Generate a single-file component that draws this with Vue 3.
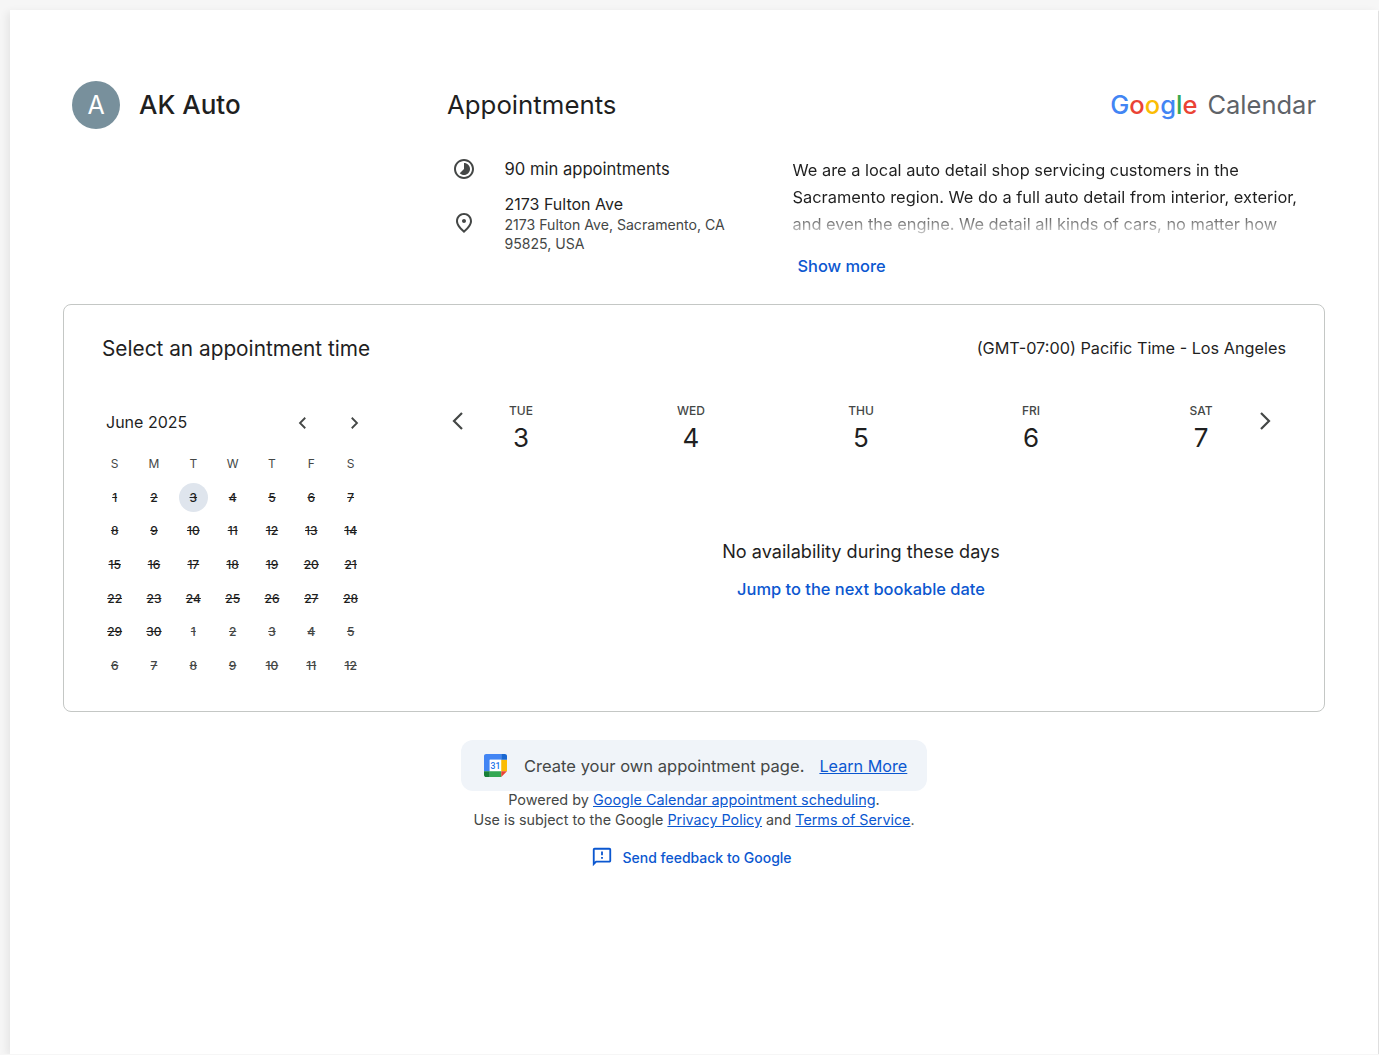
<template>
  <div class="sheet">
    <header class="top-row">
      <div class="owner">
        <div class="avatar">A</div>
        <div class="owner-name">AK Auto</div>
      </div>
      <h1 class="page-title">Appointments</h1>
      <div class="brand">
        <span class="g-word"><span class="blue">G</span><span class="red">o</span><span class="yellow">o</span><span class="blue">g</span><span class="green">l</span><span class="red">e</span></span>
        <span class="cal-word">Calendar</span>
      </div>
    </header>

    <section class="details">
      <div class="facts">
        <div class="fact">
          <svg class="fact-icon" viewBox="0 0 24 24"><path d="M16.24 7.76C15.07 6.59 13.54 6 12 6v6l-4.24 4.24c2.34 2.34 6.14 2.34 8.49 0 2.34-2.34 2.34-6.14-.01-8.48zM12 2C6.48 2 2 6.48 2 12s4.48 10 10 10 10-4.48 10-10S17.52 2 12 2zm0 18c-4.42 0-8-3.58-8-8s3.58-8 8-8 8 3.58 8 8-3.58 8-8 8z"/></svg>
          <div class="fact-main duration">90 min appointments</div>
        </div>
        <div class="fact fact-place">
          <svg class="fact-icon" viewBox="0 0 24 24"><path d="M12 12c-1.1 0-2-.9-2-2s.9-2 2-2 2 .9 2 2-.9 2-2 2zm6-1.8C18 6.57 15.35 4 12 4s-6 2.57-6 6.2c0 2.34 1.95 5.44 6 9.14 4.05-3.7 6-6.8 6-9.14zM12 2c4.2 0 8 3.22 8 8.2 0 3.32-2.67 7.25-8 11.8-5.33-4.55-8-8.48-8-11.8C4 5.22 7.8 2 12 2z"/></svg>
          <div>
            <div class="fact-main">2173 Fulton Ave</div>
            <div class="fact-sub">2173 Fulton Ave, Sacramento, CA<br>95825, USA</div>
          </div>
        </div>
      </div>
      <div class="about">
        <p class="about-text">We are a local auto detail shop servicing customers in the Sacramento region. We do a full auto detail from interior, exterior, and even the engine. We detail all kinds of cars, no matter how</p>
        <a class="show-more">Show more</a>
      </div>
    </section>

    <section class="picker">
      <div class="picker-head">
        <h2 class="picker-title">Select an appointment time</h2>
        <div class="timezone">(GMT-07:00) Pacific Time - Los Angeles</div>
      </div>
      <div class="picker-body">
        <div class="month">
          <div class="month-head">
            <span class="month-name">June 2025</span>
            <span class="month-nav">
              <svg class="chev-s" viewBox="0 0 24 24"><path d="M15 5l-7 7 7 7"/></svg>
              <svg class="chev-s" viewBox="0 0 24 24"><path d="M9 5l7 7-7 7"/></svg>
            </span>
          </div>
          <div class="grid">
            <div v-for="(d, i) in dow" :key="'h' + i" class="dow">{{ d }}</div>
            <div v-for="(c, i) in cells" :key="i" class="cell" :class="{ muted: c.muted }">
              <span class="day" :class="{ today: c.today }">{{ c.n }}</span>
            </div>
          </div>
        </div>
        <div class="week">
          <svg class="chev-l chev-prev" viewBox="0 0 24 24"><path d="M16 4l-8 8 8 8"/></svg>
          <div class="week-head">
            <div v-for="w in week" :key="w.n" class="wd">
              <div class="wd-name">{{ w.d }}</div>
              <div class="wd-num">{{ w.n }}</div>
            </div>
          </div>
          <svg class="chev-l chev-next" viewBox="0 0 24 24"><path d="M8 4l8 8-8 8"/></svg>
          <div class="empty">
            <div class="empty-text">No availability during these days</div>
            <a class="jump">Jump to the next bookable date</a>
          </div>
        </div>
      </div>
    </section>

    <footer class="foot">
      <div class="promo">
        <svg class="cal-logo" viewBox="0 0 24 24">
          <path fill="#4285f4" d="M18 0H2.2C1 0 0 1 0 2.2V18h6V6h12z"/>
          <path fill="#fff" d="M6 6h12v12H6z"/>
          <path fill="#fbbc04" d="M18 6h6v12h-6z"/>
          <path fill="#1967d2" d="M18 0v6h6V2.2C24 1 23 0 21.8 0z"/>
          <path fill="#34a853" d="M6 18h12v6H6z"/>
          <path fill="#188038" d="M0 18v3.8C0 23 1 24 2.2 24H6v-6z"/>
          <path fill="#ea4335" d="M18 18v6l6-6z"/>
          <text x="12" y="15.6" text-anchor="middle" class="cal-num">31</text>
        </svg>
        <span class="promo-text">Create your own appointment page.</span>
        <a class="promo-link">Learn More</a>
      </div>
      <div class="legal">
        <div class="powered">Powered by <a>Google Calendar appointment scheduling</a>.</div>
        <div>Use is subject to the Google <a>Privacy Policy</a> and <a>Terms of Service</a>.</div>
      </div>
      <a class="feedback">
        <svg class="fb-icon" viewBox="0 0 24 24"><path d="M20 2H4c-1.1 0-2 .9-2 2v18l4-4h14c1.1 0 2-.9 2-2V4c0-1.1-.9-2-2-2zm0 14H5.17L4 17.17V4h16v12z"/><path d="M11 12h2v2h-2zm0-6h2v4h-2z"/></svg>
        Send feedback to Google
      </a>
    </footer>
  </div>
</template>

<script setup>
const dow = ['S', 'M', 'T', 'W', 'T', 'F', 'S']

const cells = []
for (let n = 1; n <= 30; n++) cells.push({ n, today: n === 3 })
for (let n = 1; n <= 12; n++) cells.push({ n, muted: true })

const week = [
  { d: 'TUE', n: 3 },
  { d: 'WED', n: 4 },
  { d: 'THU', n: 5 },
  { d: 'FRI', n: 6 },
  { d: 'SAT', n: 7 },
]
</script>

<style>
body {
  background: #f6f6f6;
}
</style>

<style scoped>
.sheet {
  box-sizing: border-box;
  margin: 10px 1px 0 10px;
  height: 1044px;
  padding: 71px 53px 0;
  background: #fff;
  box-shadow: -3px 2px 8px rgba(0, 0, 0, 0.07), 1px 1px 0 #e2e2e2;
  font-family: Inter, "Noto Sans", sans-serif;
  color: #1f1f1f;
}

a {
  color: #0b57d0;
}

.top-row {
  display: flex;
  align-items: center;
  height: 48px;
  padding: 0 9px;
}
.owner {
  display: flex;
  align-items: center;
  gap: 20px;
  width: 375px;
}
.avatar {
  width: 48px;
  height: 48px;
  border-radius: 50%;
  background: #78909c;
  color: #fff;
  font-size: 25px;
  line-height: 48px;
  text-align: center;
}
.owner-name {
  margin: 0 0 2px -1px;
  font-size: 26px;
  font-weight: 500;
}
.page-title {
  flex: 1;
  margin: 0 0 2px;
  font-size: 25.8px;
  font-weight: 400;
}
.brand {
  display: flex;
  align-items: center;
  gap: 10px;
  margin-bottom: 2px;
  font-size: 25.5px;
}
.g-word {
  font-weight: 500;
}
.blue { color: #4285f4; }
.red { color: #ea4335; }
.yellow { color: #fbbc04; }
.green { color: #34a853; }
.cal-word {
  color: #5f6368;
}

.details {
  display: flex;
  height: 175px;
  padding: 28px 0 0 389px;
  box-sizing: border-box;
}
.facts {
  width: 340.5px;
}
.fact {
  display: flex;
  align-items: center;
  gap: 28.5px;
  font-size: 16px;
}
.fact-place {
  margin-top: 11px;
}
.fact-icon {
  flex: none;
  width: 24px;
  height: 24px;
  fill: #444746;
}
.fact-main {
  line-height: 24px;
}
.duration {
  font-size: 16.6px;
}
.fact-sub {
  margin-top: -1px;
  font-size: 14.1px;
  line-height: 19px;
  color: #444746;
}
.about {
  width: 510px;
}
.about-text {
  margin: 0;
  height: 81px;
  overflow: hidden;
  font-size: 16.4px;
  line-height: 27px;
  -webkit-mask-image: linear-gradient(to bottom, #000 52px, rgba(0, 0, 0, 0.3) 74px);
  mask-image: linear-gradient(to bottom, #000 52px, rgba(0, 0, 0, 0.3) 74px);
}
.show-more {
  display: block;
  margin: 18px 0 0 5px;
  font-size: 16.4px;
  font-weight: 500;
}

.picker {
  box-sizing: border-box;
  height: 408px;
  padding: 0 38px;
  border: 1px solid #c4c7c5;
  border-radius: 8px;
}
.picker-head {
  display: flex;
  justify-content: space-between;
  align-items: center;
  padding-top: 28px;
  height: 58px;
  box-sizing: border-box;
}
.picker-title {
  margin: 0;
  font-size: 20.8px;
  font-weight: 400;
}
.timezone {
  font-size: 16.25px;
}
.picker-body {
  display: flex;
  margin-top: 47px;
}

.month {
  width: 274px;
  margin-left: -7px;
  flex: none;
}
.month-head {
  display: flex;
  justify-content: space-between;
  align-items: center;
  height: 24px;
  padding: 0 6px 0 11px;
}
.month-name {
  font-size: 16px;
}
.month-nav {
  display: flex;
  gap: 33px;
  padding-top: 1px;
}
.chev-s {
  width: 18px;
  height: 18px;
  fill: none;
  stroke: #444746;
  stroke-width: 2.4;
}
.grid {
  display: grid;
  grid-template-columns: repeat(7, 39.33px);
  grid-auto-rows: 33.6px;
  margin-top: 13px;
  justify-items: center;
  align-items: center;
}
.dow {
  font-size: 12px;
  color: #444746;
}
.cell {
  font-size: 12px;
  font-weight: 500;
  text-decoration: line-through;
}
.cell.muted {
  color: #444746;
}
.day {
  display: block;
  width: 29px;
  height: 29px;
  line-height: 29px;
  text-align: center;
  border-radius: 50%;
}
.day.today {
  background: #dfe5ed;
}

.week {
  position: relative;
  flex: 1;
  margin: -7px 0 0 67px;
}
.week-head {
  display: flex;
}
.chev-l {
  position: absolute;
  top: 6px;
  width: 24px;
  height: 24px;
  fill: none;
  stroke: #444746;
  stroke-width: 2.2;
}
.chev-prev {
  left: 10px;
}
.chev-next {
  right: 9px;
}
.wd {
  flex: 1;
  text-align: center;
}
.wd-name {
  font-size: 12px;
  font-weight: 500;
  color: #444746;
  line-height: 15px;
}
.wd-num {
  margin-top: 2px;
  font-size: 26px;
  line-height: 36px;
}
.empty {
  margin-top: 84px;
  text-align: center;
}
.empty-text {
  font-size: 18.1px;
}
.jump {
  display: block;
  margin-top: 17px;
  font-size: 16.45px;
  font-weight: 500;
}

.foot {
  display: flex;
  flex-direction: column;
  align-items: center;
  margin-top: 28px;
}
.promo {
  display: flex;
  align-items: center;
  box-sizing: border-box;
  width: 466px;
  height: 51px;
  padding-left: 23px;
  border-radius: 12px;
  background: #f0f4f9;
}
.cal-logo {
  width: 23px;
  height: 23px;
}
.cal-num {
  font-family: Roboto, sans-serif;
  font-size: 9px;
  font-weight: 500;
  fill: #1a73e8;
}
.promo-text {
  margin-left: 17px;
  font-size: 16.55px;
  color: #444746;
}
.promo-link {
  margin-left: 15px;
  font-size: 16.2px;
  text-decoration: underline;
}
.legal {
  margin-top: -1px;
  font-size: 14.3px;
  line-height: 20px;
  text-align: center;
  color: #444746;
}
.powered {
  font-size: 14.45px;
}
.legal a {
  text-decoration: underline;
}
.feedback {
  display: flex;
  align-items: center;
  gap: 9px;
  margin-top: 16px;
  padding-right: 5px;
  font-size: 14px;
  font-weight: 500;
}
.fb-icon {
  width: 22px;
  height: 22px;
  fill: #0b57d0;
}
</style>
